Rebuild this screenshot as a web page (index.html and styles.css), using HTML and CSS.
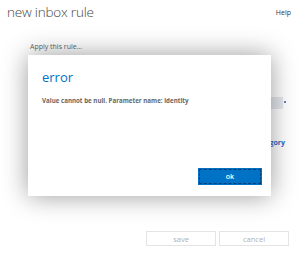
FILE: index.html
```html
<!DOCTYPE html>
<html lang="en">
<head>
<meta charset="UTF-8">
<title>new inbox rule</title>
<link rel="stylesheet" href="styles.css">
</head>
<body>

<div class="page">
  <div class="header">
    <h1>new inbox rule</h1>
    <a class="help" href="#">Help</a>
  </div>

  <div class="form">
    <div class="label">Apply this rule...</div>
    <div class="row">
      <div class="select"><span class="dot"></span></div>
    </div>
    <div class="row link-row">
      <a class="link" href="#">add category</a>
    </div>
  </div>

  <div class="footer">
    <button class="btn">save</button>
    <button class="btn">cancel</button>
  </div>
</div>

<div class="dialog">
  <h2>error</h2>
  <p>Value cannot be null. Parameter name: identity</p>
  <div class="actions">
    <button class="ok">ok</button>
  </div>
</div>

</body>
</html>
```

FILE: styles.css
```css
body {
  font-family: "Open Sans", "Noto Sans", sans-serif;
  background-color: #fff;
  margin: 0;
  padding: 0;
  width: 300px;
  height: 255px;
  overflow: hidden;
  position: relative;
}
.page {
  height: 255px;
  display: flex;
  flex-direction: column;
}
.header {
  display: flex;
  justify-content: space-between;
  align-items: flex-start;
  padding: 3px 9px 0 7px;
}
h1 {
  margin: 0;
  font-size: 13.5px;
  font-weight: 300;
  color: #444;
  letter-spacing: -0.2px;
}
.help {
  font-size: 7px;
  color: #333;
  text-decoration: none;
  margin-top: 5px;
}
.form {
  padding: 21px 0 0 30px;
  flex: 1;
}
.label {
  font-size: 7px;
  color: #666;
}
.row {
  display: flex;
  justify-content: flex-end;
  padding-right: 17px;
}
.select {
  width: 13px;
  height: 12px;
  background-color: #e4e8ee;
  margin-top: 46px;
  position: relative;
}
.dot {
  position: absolute;
  right: -3px;
  top: 4px;
  width: 2px;
  height: 2px;
  background-color: #6a7fd0;
}
.link-row {
  margin-top: 29px;
  padding-right: 15px;
}
.link {
  font-size: 7px;
  font-weight: bold;
  color: #2a6bc4;
  text-decoration: none;
}
.footer {
  display: flex;
  justify-content: flex-end;
  gap: 3px;
  padding: 0 11px 9px 0;
}
.btn {
  width: 70px;
  height: 15px;
  border: 1px solid #e4e4e4;
  background-color: #fff;
  color: #b0b0b0;
  font-family: inherit;
  font-size: 7.5px;
  padding: 0;
}
.dialog {
  position: absolute;
  left: 28px;
  top: 55px;
  width: 243px;
  height: 141px;
  background-color: #fff;
  box-shadow: 0 0 24px rgba(0, 0, 0, 0.4);
  box-sizing: border-box;
  padding: 13px 10px 0 14px;
  display: flex;
  flex-direction: column;
}
.dialog h2 {
  margin: 0;
  font-size: 13px;
  font-weight: normal;
  color: #0072c6;
}
.dialog p {
  margin: 10px 0 0;
  font-size: 6.2px;
  font-weight: bold;
  color: #666;
}
.actions {
  margin-top: auto;
  display: flex;
  justify-content: flex-end;
  padding-bottom: 12px;
}
.ok {
  width: 62px;
  height: 15px;
  background-color: #0072c6;
  border: 1px dashed #003f7a;
  outline: 1px solid #0072c6;
  color: #fff;
  font-family: inherit;
  font-size: 7px;
  font-weight: 600;
  padding: 0;
}
```
